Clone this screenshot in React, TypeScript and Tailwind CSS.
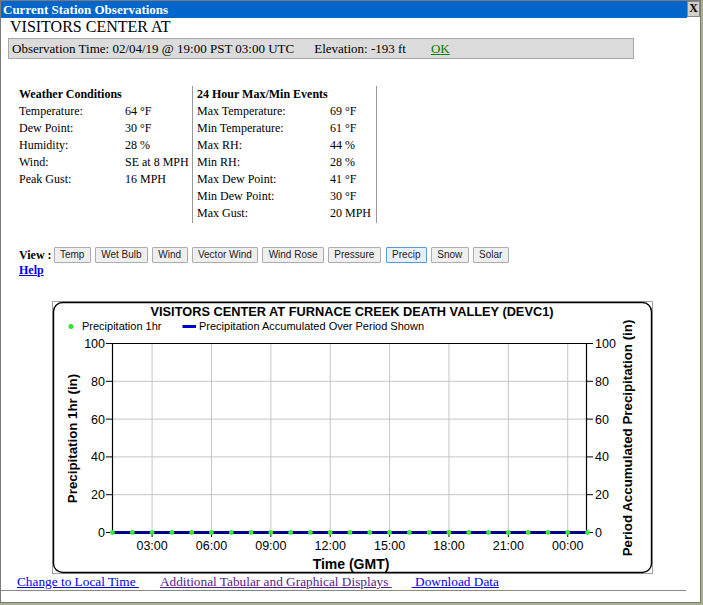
import React from "react";

const buttons = ["Temp", "Wet Bulb", "Wind", "Vector Wind", "Wind Rose", "Pressure", "Precip", "Snow", "Solar"];

function Chart() {
  const x0 = 111;
  const x1 = 586;
  const yTop = 342;
  const yBot = 531;
  const step = (x1 - x0) / 24;
  const hours = Array.from({ length: 25 }, (_, i) => x0 + i * step);
  const yVals = [100, 80, 60, 40, 20, 0];
  const yPos = (v: number) => yBot - (v / 100) * (yBot - yTop);
  const xLabels = ["03:00", "06:00", "09:00", "12:00", "15:00", "18:00", "21:00", "00:00"];
  const xLabelPos = xLabels.map((_, k) => x0 + (2 + 3 * k) * step);
  const sans = "'Liberation Sans', Arial, sans-serif";
  return (
    <svg width={601} height={273} className="block ml-[51px]" style={{ fontFamily: sans }}>
      <g transform="translate(-51,-300)">
        <rect x={51.5} y={300.5} width={600} height={272} fill="#fff" stroke="#a0a0a0" strokeWidth={1} />
        <rect x={52.5} y={301.5} width={598} height={270} rx={9} ry={9} fill="#fff" stroke="#000" strokeWidth={1.4} />
        <text x={351} y={315} textAnchor="middle" fontWeight="bold" fontSize={13} textLength={403} lengthAdjust="spacingAndGlyphs" fill="#000">
          VISITORS CENTER AT FURNACE CREEK DEATH VALLEY (DEVC1)
        </text>
        <circle cx={70} cy={325.5} r={2.5} fill="#2ee62e" />
        <text x={81} y={329} fontSize={11} fill="#000">Precipitation 1hr</text>
        <rect x={181.5} y={324} width={13.5} height={3} fill="#0000cc" />
        <text x={198} y={329} fontSize={11} fill="#000">Precipitation Accumulated Over Period Shown</text>
        {yVals.map((v) => (
          <line key={"h" + v} x1={x0} x2={x1} y1={yPos(v) + 0.5} y2={yPos(v) + 0.5} stroke="#c6c6c6" strokeWidth={1} />
        ))}
        {xLabelPos.map((x, i) => (
          <line key={"v" + i} x1={x + 0.5} x2={x + 0.5} y1={yTop} y2={yBot} stroke="#c6c6c6" strokeWidth={1} />
        ))}
        <line x1={x0 + 0.5} x2={x0 + 0.5} y1={yTop} y2={yBot + 1} stroke="#000" strokeWidth={1.2} />
        <line x1={x1 - 0.5} x2={x1 - 0.5} y1={yTop} y2={yBot + 1} stroke="#000" strokeWidth={1.2} />
        <line x1={x0} x2={x1} y1={yTop + 0.5} y2={yTop + 0.5} stroke="#000" strokeWidth={1.2} />
        {yVals.map((v) => (
          <g key={"t" + v}>
            <line x1={105} x2={x0} y1={yPos(v) + 0.5} y2={yPos(v) + 0.5} stroke="#000" strokeWidth={1} />
            <text x={104} y={yPos(v) + 5} textAnchor="end" fontSize={12.5} fill="#000">{v}</text>
            <line x1={x1} x2={592} y1={yPos(v) + 0.5} y2={yPos(v) + 0.5} stroke="#000" strokeWidth={1} />
            <text x={594} y={yPos(v) + 5} fontSize={12.5} fill="#000">{v}</text>
          </g>
        ))}
        {xLabelPos.map((x, i) => (
          <g key={"x" + i}>
            <line x1={x + 0.5} x2={x + 0.5} y1={yBot} y2={yBot + 5} stroke="#000" strokeWidth={1} />
            <text x={x + 0.5} y={548.5} textAnchor="middle" fontSize={12.5} fill="#000">{xLabels[i]}</text>
          </g>
        ))}
        <line x1={x0} x2={x1} y1={yBot + 0.5} y2={yBot + 0.5} stroke="#000088" strokeWidth={3} />
        {hours.map((x, i) => (
          <circle key={"d" + i} cx={x + 0.5} cy={yBot + 0.5} r={2.4} fill="#3be83b" />
        ))}
        <text x={350} y={568} textAnchor="middle" fontWeight="bold" fontSize={14} fill="#000">Time (GMT)</text>
        <text transform="translate(75.5,437.5) rotate(-90)" textAnchor="middle" fontWeight="bold" fontSize={13.3} fill="#000">
          Precipitation 1hr (in)
        </text>
        <text transform="translate(631,437) rotate(-90)" textAnchor="middle" fontWeight="bold" fontSize={13.3} fill="#000">
          Period Accumulated Precipitation (in)
        </text>
      </g>
    </svg>
  );
}

export default function App() {
  const left = [
    ["Temperature:", "64 °F"],
    ["Dew Point:", "30 °F"],
    ["Humidity:", "28 %"],
    ["Wind:", "SE at 8 MPH"],
    ["Peak Gust:", "16 MPH"],
  ];
  const right = [
    ["Max Temperature:", "69 °F"],
    ["Min Temperature:", "61 °F"],
    ["Max RH:", "44 %"],
    ["Min RH:", "28 %"],
    ["Max Dew Point:", "41 °F"],
    ["Min Dew Point:", "30 °F"],
    ["Max Gust:", "20 MPH"],
  ];
  return (
    <div className="w-[703px] h-[605px] bg-[#a6b08e] overflow-hidden">
      <div className="w-[701px] h-[603px] bg-white border border-[#7a7a7a] font-['Liberation_Serif',serif] text-black">
        <div className="flex h-[17px]">
          <div className="flex-1 bg-[#0066cc] text-white font-bold text-[13px] leading-[17px] pl-[2px] whitespace-nowrap">
            Current Station Observations
          </div>
          <div className="w-[13px] h-[16px] bg-[#d4d0c8] border border-[#888] text-[12px] leading-[13px] font-bold text-center">
            X
          </div>
        </div>
        <div className="text-[16px] leading-[18px] pl-[9px] whitespace-nowrap">VISITORS CENTER AT</div>
        <div className="mt-[2px] ml-[7px] w-[626px] h-[21px] bg-[#dcdcdc] border border-[#a8a8a8] text-[13px] leading-[19px] pl-[3px] whitespace-nowrap">
          <span>Observation Time: 02/04/19 @ 19:00 PST 03:00 UTC</span>
          <span className="ml-[20px]">Elevation: -193 ft</span>
          <span className="ml-[25px] text-[#008000] underline">OK</span>
        </div>

        <div className="mt-[27px] ml-[16px] flex text-[12px] leading-[17px] whitespace-nowrap">
          <div className="w-[176px] h-[137px] border-r border-[#999] pl-[2px]">
            <div className="font-bold">Weather Conditions</div>
            {left.map(([k, v]) => (
              <div key={k} className="flex">
                <div className="w-[106px]">{k}</div>
                <div>{v}</div>
              </div>
            ))}
          </div>
          <div className="w-[184px] h-[137px] border-r border-[#999] pl-[4px]">
            <div className="font-bold">24 Hour Max/Min Events</div>
            {right.map(([k, v]) => (
              <div key={k} className="flex">
                <div className="w-[133px]">{k}</div>
                <div>{v}</div>
              </div>
            ))}
          </div>
        </div>

        <div className="mt-[23px] ml-[18px] flex items-center h-[17px] whitespace-nowrap">
          <span className="font-bold text-[12px] mr-[2px]">View :</span>
          <div className="flex gap-[4px]">
            {buttons.map((b) => (
              <div
                key={b}
                className={
                  b === "Precip"
                    ? "h-[16px] px-[5.4px] flex items-center border border-[#5b9bd5] bg-[#e8f1fb] rounded-[1px] text-[10px] text-[#222] font-['Liberation_Sans',Arial,sans-serif] ml-[1px]"
                    : "h-[16px] px-[5.4px] flex items-center border border-[#adadad] bg-[#efefef] rounded-[1px] text-[10px] text-[#222] font-['Liberation_Sans',Arial,sans-serif]"
                }
              >
                {b}
              </div>
            ))}
          </div>
        </div>
        <div className="ml-[18px] text-[12px] leading-[15px] font-bold text-[#0000ee] underline">Help</div>

        <div className="mt-[23px]">
          <Chart />
        </div>

        <div className="w-[685px] border-b border-[#888] pl-[16px] text-[13.3px] leading-[16px] whitespace-nowrap">
          <span className="text-[#0000ee] underline">Change to Local Time&nbsp;</span>
          <span className="ml-[21px] text-[#551a8b] underline">Additional Tabular and Graphical Displays&nbsp;</span>
          <span className="ml-[20px] text-[#0000ee] underline">&nbsp;Download Data</span>
        </div>
      </div>
    </div>
  );
}
